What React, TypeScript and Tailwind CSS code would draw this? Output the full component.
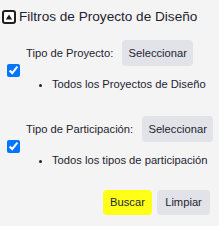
import React from "react";

function BoxIcon() {
  return (
    <svg width="16" height="16" viewBox="0 0 16 16" className="shrink-0">
      <rect x="2" y="2" width="12" height="12" rx="2" fill="#fff" stroke="#1f1f1f" strokeWidth="2" />
      <path d="M4.8 10.6 L8 5.6 L11.2 10.6 Z" fill="#1f1f1f" />
    </svg>
  );
}

function Block({ label, item }: { label: string; item: string }) {
  return (
    <div className="flex">
      <input
        type="checkbox"
        defaultChecked
        className="m-0 mt-[24px] ml-[7px] w-[13px] h-[13px] self-start shrink-0"
      />
      <div className="ml-[6px]">
        <div className="flex items-center whitespace-nowrap">
          <span>{label}</span>
          <button className="ml-[9px] h-[26px] w-[71px] rounded-[4px] bg-[#e1e3e8] text-[#1e2330]">Seleccionar</button>
        </div>
        <ul className="list-disc pl-[26px] mt-[8px] leading-[20px] whitespace-nowrap">
          <li>{item}</li>
        </ul>
      </div>
    </div>
  );
}

export default function App() {
  return (
    <div className="w-[219px] h-[226px] overflow-hidden bg-[#f4f4f5] text-[#1e2330] text-[11.2px] font-['Liberation_Sans',Arial,sans-serif]">
      <div className="flex items-center gap-[2px] pl-[1px] pt-[6px] h-[28px]">
        <BoxIcon />
        <span className="text-[13.6px] whitespace-nowrap">Filtros de Proyecto de Diseño</span>
      </div>
      <div className="mt-[12px]">
        <Block label="Tipo de Proyecto:" item="Todos los Proyectos de Diseño" />
      </div>
      <div className="mt-[22px]">
        <Block label="Tipo de Participación:" item="Todos los tipos de participación" />
      </div>
      <div className="flex justify-end gap-[5px] pr-[9px] mt-[20px]">
        <button className="h-[25px] w-[49px] rounded-[4px] bg-[#ffff17] text-[#1e2330]">Buscar</button>
        <button className="h-[25px] w-[53px] rounded-[4px] bg-[#e1e3e8] text-[#1e2330]">Limpiar</button>
      </div>
    </div>
  );
}
